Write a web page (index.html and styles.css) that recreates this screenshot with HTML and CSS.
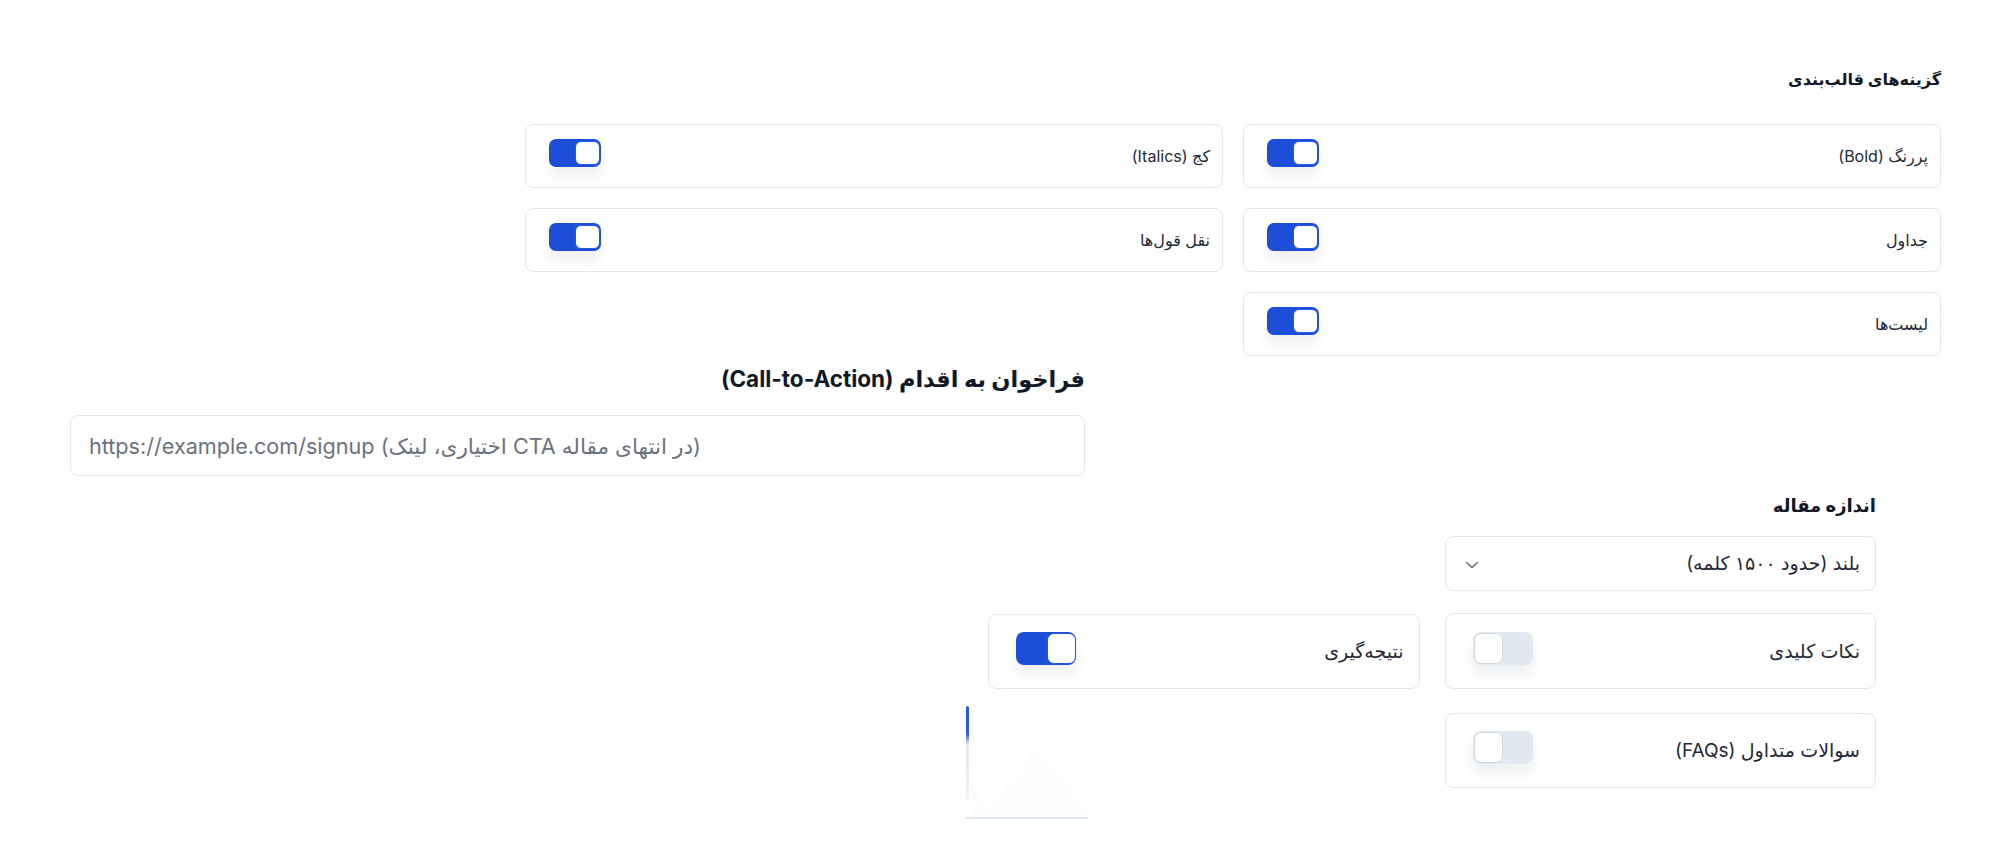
FILE: index.html
```html
<!DOCTYPE html>
<html lang="fa" dir="rtl">
<head>
    <meta charset="UTF-8">
    <meta name="viewport" content="width=device-width, initial-scale=1.0">
    <title>تنظیمات مقاله</title>
    <link rel="stylesheet" href="styles.css">
</head>
<body>
    <div class="page">
        <section class="formatting">
            <h3 class="title-sm">گزینه‌های قالب‌بندی</h3>
            <div class="grid">
                <label class="option">
                    <span>پررنگ (Bold)</span>
                    <span class="switch on"><span class="knob"></span></span>
                </label>
                <label class="option">
                    <span>کج (Italics)</span>
                    <span class="switch on"><span class="knob"></span></span>
                </label>
                <label class="option">
                    <span>جداول</span>
                    <span class="switch on"><span class="knob"></span></span>
                </label>
                <label class="option">
                    <span>نقل قول‌ها</span>
                    <span class="switch on"><span class="knob"></span></span>
                </label>
                <label class="option">
                    <span>لیست‌ها</span>
                    <span class="switch on"><span class="knob"></span></span>
                </label>
            </div>
        </section>

        <section class="cta">
            <h2 class="title-lg">فراخوان به اقدام (Call-to-Action)</h2>
            <input class="text-input" type="text" placeholder="(در انتهای مقاله CTA اختیاری، لینک) https://example.com/signup">
        </section>

        <section class="size">
            <h2 class="title-md">اندازه مقاله</h2>
            <div class="grid wide">
                <div class="select">
                    <span>بلند (حدود ۱۵۰۰ کلمه)</span>
                    <svg width="14" height="8" viewBox="0 0 14 8" fill="none"><path d="M1.5 1.5 7 6.5l5.5-5" stroke="#6b7280" stroke-width="1.6" stroke-linecap="round" stroke-linejoin="round"/></svg>
                </div>
                <div></div>
                <label class="option big">
                    <span>نکات کلیدی</span>
                    <span class="switch lg"><span class="knob"></span></span>
                </label>
                <label class="option big">
                    <span>نتیجه‌گیری</span>
                    <span class="switch lg on"><span class="knob"></span></span>
                </label>
                <label class="option big">
                    <span>سوالات متداول (FAQs)</span>
                    <span class="switch lg"><span class="knob"></span></span>
                </label>
                <div class="ghost"></div>
            </div>
        </section>
    </div>
</body>
</html>
```

FILE: styles.css
```css
*{
    box-sizing: border-box;
}
html, body{
    margin: 0;
    background: #fff;
}
body{
    font-family: Inter, "DejaVu Sans", sans-serif;
    color: #1f2937;
    min-height: 860px;
}

.page {
    display: flex;
    flex-direction: column;
    padding-bottom: 60px;
}

/* section blocks */
.formatting {
    width: 1416px;
    margin-right: 59px;
    padding-top: 67px;
}
.cta {
    width: 1015px;
    margin-right: 915px;
    margin-top: 8px;
}
.size {
    width: 888px;
    margin-right: 124px;
    margin-top: 16px;
}

.title-sm, .title-md, .title-lg {
    margin: 0;
    color: #111827;
    font-weight: 700;
}
.title-sm {
    font-size: 16px;
    line-height: 24px;
    margin-bottom: 33px;
}
.title-lg {
    font-size: 22.5px;
    line-height: 30px;
    margin-bottom: 21px;
}
.title-md {
    font-size: 18px;
    line-height: 27px;
    margin-bottom: 17px;
}

.grid {
    display: grid;
    grid-template-columns: 1fr 1fr;
    column-gap: 20px;
    row-gap: 20px;
    grid-auto-rows: 64px;
}
.grid.wide {
    column-gap: 25px;
    row-gap: 24px;
    grid-template-rows: 54px 75px 75px;
    grid-auto-rows: auto;
}
.grid.wide .select {
    margin-bottom: -1px;
}
.grid.wide > :nth-child(3) {
    margin-top: -1px;
}

.option {
    display: flex;
    align-items: center;
    justify-content: space-between;
    border: 1.5px solid #e3e8f0;
    border-radius: 8px;
    padding: 0 12px 0 23px;
    font-size: 16px;
    color: #1f2937;
    background: #fff;
}
.option.big {
    padding: 0 15px 0 27px;
    font-size: 19px;
}

.switch {
    display: flex;
    justify-content: flex-end;
    width: 52px;
    height: 28px;
    padding: 2px;
    border-radius: 7px;
    background: #e2e8f0;
    margin-bottom: 6px;
    box-shadow: 0 9px 14px rgba(15, 23, 42, 0.07);
}
.switch .knob {
    width: 25px;
    height: 24px;
    border-radius: 6px;
    background: #fff;
    border: 1.5px solid #cfd6e0;
}
.switch.on {
    background: #1d4ed8;
    justify-content: flex-start;
}
.switch.on .knob {
    border-color: #2554e0;
    margin-right: -1px;
}
.switch.lg {
    width: 60px;
    height: 33px;
    border-radius: 8px;
    padding: 1px;
}
.switch.lg .knob {
    width: 29px;
    height: 31px;
    border-radius: 7px;
}

.text-input {
    display: block;
    width: 100%;
    height: 61px;
    border: 1.5px solid #e3e8f0;
    border-radius: 8px;
    padding: 0 18px;
    font-family: Inter, "DejaVu Sans", sans-serif;
    font-size: 21.6px;
    direction: rtl;
    text-align: left;
    outline: none;
}
.text-input::placeholder {
    color: #6b7280;
}

.select {
    display: flex;
    align-items: center;
    justify-content: space-between;
    border: 1.5px solid #e3e8f0;
    border-radius: 8px;
    padding: 0 15px 0 19px;
    font-size: 19px;
    color: #1f2937;
}
.select svg {
    margin-top: 2px;
}

.ghost {
    position: relative;
    justify-self: end;
    align-self: start;
    width: 122px;
    height: 113px;
    margin: -7px 0 0 -22px;
    border-bottom: 2px solid #dfe4f2;
}
.ghost::before {
    content: "";
    position: absolute;
    left: 0;
    top: 0;
    width: 3px;
    height: 100px;
    border-radius: 2px;
    background: linear-gradient(#2d5be3 0%, #2d5be3 28%, #e3e8f1 38%, #edf0f5 85%, transparent 100%);
}
.ghost::after {
    content: "";
    position: absolute;
    left: 4px;
    right: 0;
    top: 30px;
    bottom: 0;
    background: #fcfcfd;
    clip-path: polygon(0 55%, 20% 100%, 10% 100%, 55% 15%, 100% 85%, 100% 100%, 0 100%);
}
```
